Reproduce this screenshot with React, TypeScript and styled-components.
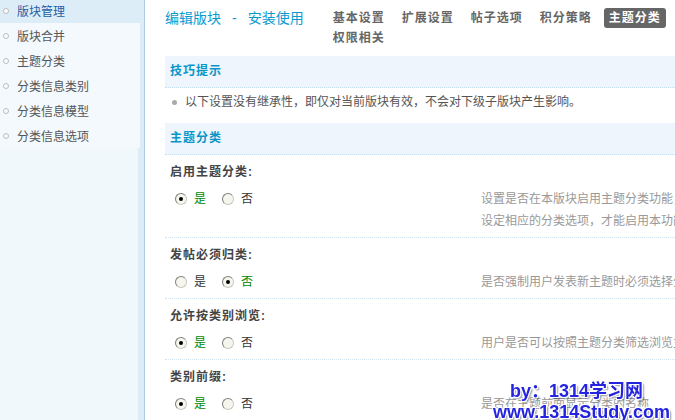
import React from "react";
import styled, { createGlobalStyle } from "styled-components";

const GlobalStyle = createGlobalStyle`
  html, body, #root {
    height: 100%;
  }
  body {
    margin: 0;
    overflow: hidden;
    background: #fff;
    font-family: "Liberation Sans", "Noto Sans CJK SC", sans-serif;
    font-size: 12px;
    color: #333;
  }
  ul {
    margin: 0;
    padding: 0;
    list-style: none;
  }
`;

const Page = styled.div`
  display: flex;
  min-height: 100%;
`;

const Sidebar = styled.div`
  width: 144px;
  flex-shrink: 0;
  background: linear-gradient(to right, #f0f8fc 138px, #dcecf7 138px);
  border-right: 1px solid #a9cbe3;
`;

const Menu = styled.ul`
  margin-top: -2px;
`;

const MenuItem = styled.li<{ $active?: boolean }>`
  display: flex;
  align-items: center;
  height: 25px;
  padding-left: 3px;
  margin-right: ${(p) => (p.$active ? "0" : "4px")};
  background: ${(p) => (p.$active ? "#ddedf8" : "#f3f9fd")};
  color: ${(p) => (p.$active ? "#1d5fa6" : "#555")};

  &::before {
    content: "";
    width: 4px;
    height: 4px;
    border: 1px solid #bbb;
    border-radius: 50%;
    background: #fff;
    margin-right: 8px;
  }
`;

const Main = styled.div`
  flex: 1;
  min-width: 0;
  padding-left: 20px;
`;

const Header = styled.div`
  display: flex;
  align-items: flex-start;
  padding: 8px 0;
`;

const Title = styled.h1`
  margin: 0 24px 0 0;
  font-size: 14px;
  font-weight: normal;
  line-height: 20px;
  color: #0a9acf;
  white-space: nowrap;
`;

const Dash = styled.span`
  margin: 0 11px;
`;

const Tabs = styled.ul`
  flex: 1;
  min-width: 0;
  display: flex;
  flex-wrap: wrap;
  column-gap: 7px;
`;

const Tab = styled.li<{ $active?: boolean }>`
  height: 20px;
  line-height: 20px;
  padding: 0 5px;
  border-radius: 3px;
  font-weight: bold;
  letter-spacing: 1px;
  color: ${(p) => (p.$active ? "#fff" : "#666")};
  background: ${(p) => (p.$active ? "#666" : "transparent")};
`;

const SectionTitle = styled.h2`
  margin: 0;
  height: 31px;
  line-height: 31px;
  padding-left: 5px;
  font-size: 12px;
  letter-spacing: 1px;
  color: #0a95c8;
  background: #eef5fd;
  border-bottom: 1px dotted #c5dff0;
`;

const Tips = styled.ul`
  padding: 4px 0 11px 7px;
`;

const Tip = styled.li`
  display: flex;
  align-items: center;
  line-height: 20px;
  color: #555;

  &::before {
    content: "";
    width: 5px;
    height: 5px;
    border-radius: 50%;
    background: #aaa;
    margin-right: 8px;
  }
`;

const Row = styled.div`
  padding: 7px 0 5px;
  border-bottom: 1px dotted #cfe3f0;
`;

const RowLabel = styled.div`
  padding-left: 5px;
  line-height: 20px;
  font-weight: bold;
  letter-spacing: 1px;
  color: #444;
`;

const RowBody = styled.div`
  display: grid;
  grid-template-columns: 316px 270px;
  margin-top: 6px;
  line-height: 22px;
`;

const Options = styled.div`
  display: flex;
  align-items: flex-start;
  gap: 16px;
  padding-left: 10px;
`;

const Option = styled.label<{ $checked?: boolean }>`
  display: flex;
  align-items: center;
  height: 22px;
  color: ${(p) => (p.$checked ? "#080" : "#333")};
`;

const Radio = styled.span<{ $checked?: boolean }>`
  position: relative;
  width: 12px;
  height: 12px;
  box-sizing: border-box;
  margin-right: 7px;
  border-radius: 50%;
  border: 1px solid #c9c9c0;
  border-top-color: #7f7f78;
  border-left-color: #7f7f78;
  background: #f6f6ef;

  &::after {
    content: "";
    display: ${(p) => (p.$checked ? "block" : "none")};
    position: absolute;
    left: 3px;
    top: 3px;
    width: 4px;
    height: 4px;
    border-radius: 50%;
    background: #000;
  }
`;

const Desc = styled.div`
  color: #999;
`;

const Stamp = styled.div`
  position: fixed;
  right: 5px;
  bottom: -3px;
  text-align: right;
  font-family: "Liberation Sans", "Noto Sans CJK SC", sans-serif;
  font-weight: bold;
  font-size: 18px;
  line-height: 21px;
  color: #2424e0;
  text-shadow: -1px -1px 0 #fff, 1px -1px 0 #fff, -1px 1px 0 #fff,
    1px 1px 0 #fff, 2px 2px 2px rgba(0, 0, 0, 0.45);
`;

const StampLine = styled.div<{ $indent?: number }>`
  margin-right: ${(p) => p.$indent ?? 0}px;
  white-space: nowrap;
`;

const menu = ["版块管理", "版块合并", "主题分类", "分类信息类别", "分类信息模型", "分类信息选项"];
const tabs = ["基本设置", "扩展设置", "帖子选项", "积分策略", "主题分类", "权限相关"];

const settings = [
  {
    label: "启用主题分类:",
    yes: true,
    desc: "设置是否在本版块启用主题分类功能，您需要同时设定相应的分类选项，才能启用本功能",
  },
  { label: "发帖必须归类:", yes: false, desc: "是否强制用户发表新主题时必须选择分类" },
  { label: "允许按类别浏览:", yes: true, desc: "用户是否可以按照主题分类筛选浏览主题" },
  { label: "类别前缀:", yes: true, desc: "是否在主题前面显示分类的名称" },
];

export default function App() {
  return (
    <>
      <GlobalStyle />
      <Page>
        <Sidebar>
          <Menu>
            {menu.map((m, i) => (
              <MenuItem key={m} $active={i === 0}>
                {m}
              </MenuItem>
            ))}
          </Menu>
        </Sidebar>
        <Main>
          <Header>
            <Title>
              编辑版块<Dash>-</Dash>安装使用
            </Title>
            <Tabs>
              {tabs.map((t, i) => (
                <Tab key={t} $active={i === 4}>
                  {t}
                </Tab>
              ))}
            </Tabs>
          </Header>
          <SectionTitle>技巧提示</SectionTitle>
          <Tips>
            <Tip>以下设置没有继承性，即仅对当前版块有效，不会对下级子版块产生影响。</Tip>
          </Tips>
          <SectionTitle>主题分类</SectionTitle>
          {settings.map((s) => (
            <Row key={s.label}>
              <RowLabel>{s.label}</RowLabel>
              <RowBody>
                <Options>
                  <Option $checked={s.yes}>
                    <Radio $checked={s.yes} />是
                  </Option>
                  <Option $checked={!s.yes}>
                    <Radio $checked={!s.yes} />否
                  </Option>
                </Options>
                <Desc>{s.desc}</Desc>
              </RowBody>
            </Row>
          ))}
        </Main>
      </Page>
      <Stamp>
        <StampLine $indent={27}>by：1314学习网</StampLine>
        <StampLine>www.1314Study.com</StampLine>
      </Stamp>
    </>
  );
}
